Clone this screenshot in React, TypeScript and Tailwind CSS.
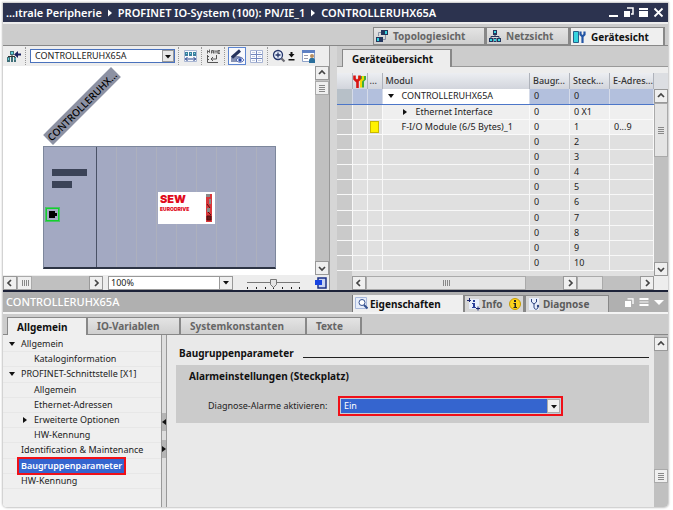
import { useState } from "react";
import type { ReactNode } from "react";

type Dir = "up" | "down" | "left" | "right";

const chevrons: Record<Dir, string> = {
  up: "M1 5 4 2 7 5",
  down: "M1 3 4 6 7 3",
  left: "M5 1 2 4 5 7",
  right: "M3 1 6 4 3 7",
};

const directionNames: Record<Dir, string> = {
  up: "Nach oben",
  down: "Nach unten",
  left: "Nach links",
  right: "Nach rechts",
};

function ScrollButton({ dir }: { dir: Dir }) {
  return (
    <button
      type="button"
      aria-label={directionNames[dir]}
      className="flex size-[14px] shrink-0 items-center justify-center border border-[#999] bg-[#efefef]"
    >
      <svg viewBox="0 0 8 8" className="size-2" fill="none" stroke="#444" strokeWidth="1.7">
        <path d={chevrons[dir]} />
      </svg>
    </button>
  );
}

function Grip({ vertical }: { vertical?: boolean }) {
  return (
    <svg viewBox="0 0 8 8" className="size-2" stroke="#888" strokeWidth="1">
      <path d={vertical ? "M1.5 1v6M3.5 1v6M5.5 1v6M7.5 1v6" : "M1 1.5h6M1 3.5h6M1 5.5h6M1 7.5h6"} />
    </svg>
  );
}

function DownTriangle() {
  return (
    <svg viewBox="0 0 8 5" className="h-[5px] w-2">
      <path d="M1 1h6L4 4.5z" fill="#111" />
    </svg>
  );
}

function Expander({ open }: { open: boolean }) {
  return (
    <svg viewBox="0 0 8 8" className="size-2 shrink-0">
      <path d={open ? "M1 2h6L4 6z" : "M2 1v6l4-3z"} fill="#111" />
    </svg>
  );
}

function TitleBar() {
  return (
    <header className="flex h-[19px] shrink-0 items-center justify-between bg-[#2c334f] pr-1 pl-[3px] text-white">
      <nav aria-label="Pfad" className="flex items-center text-[11px] leading-4 font-semibold whitespace-nowrap">
        <span>...ıtrale Peripherie</span>
        <svg viewBox="0 0 8 8" className="mx-1 size-2">
          <path d="M2 0.500v7l4-3.500z" fill="#fff" />
        </svg>
        <span>PROFINET IO-System (100): PN/IE_1</span>
        <svg viewBox="0 0 8 8" className="mx-1 size-2">
          <path d="M2 0.500v7l4-3.500z" fill="#fff" />
        </svg>
        <span>CONTROLLERUHX65A</span>
      </nav>
      <div className="flex items-center gap-1">
        <button type="button" aria-label="Minimieren">
          <svg viewBox="0 0 11 11" className="size-[11px]"><path d="M1 8h9v2H1z" fill="#fff" /></svg>
        </button>
        <button type="button" aria-label="Schwebend">
          <svg viewBox="0 0 11 11" className="size-[11px]">
            <path d="M4 1h6v6H8" fill="none" stroke="#fff" strokeWidth="1.500" />
            <path d="M1 4h6v6H1z" fill="#fff" />
          </svg>
        </button>
        <button type="button" aria-label="Maximieren">
          <svg viewBox="0 0 11 11" className="size-[11px]">
            <path d="M1 1h9v2H1zM1 4h9v6H1z" fill="#fff" />
          </svg>
        </button>
        <button type="button" aria-label="Schließen">
          <svg viewBox="0 0 11 11" className="size-[11px]" stroke="#fff" strokeWidth="1.800">
            <path d="M1.500 1.500l8 8M9.500 1.500l-8 8" />
          </svg>
        </button>
      </div>
    </header>
  );
}

function TopologyIcon() {
  return (
    <svg viewBox="0 0 12 12" className="size-3">
      <path d="M5 2.500H2.500V6M9.500 5v4.500H7" fill="none" stroke="#8a93a5" />
      <path d="M5 0h7v5H5zM0 7h7v5H0z" fill="#24365e" />
      <path d="M9 1h2v3H9zM1 8h2v3H1z" fill="#36d3dd" />
    </svg>
  );
}

function NetworkIcon() {
  return (
    <svg viewBox="0 0 12 12" className="size-3">
      <path d="M6 4v3M2 9V6.500h8V9" fill="none" stroke="#24365e" />
      <path d="M4 0h4v5H4zM0 8h4v4H0zM4.500 8h3v4h-3zM8 8h4v4H8z" fill="#24365e" />
      <path d="M5 1h2v2H5zM1 9h2v2H1zM5 9h2v2H5zM9 9h2v2H9z" fill="#36d3dd" />
    </svg>
  );
}

function DeviceIcon() {
  return (
    <svg viewBox="0 0 13 12" className="h-3 w-[13px]">
      <path d="M0.500 0.500h5v11h-5z" fill="#36d3dd" stroke="#24608a" />
      <path d="M7.500 0.500v3l2 2 2-2v-3M9.500 5v7" fill="none" stroke="#2355a5" strokeWidth="2.200" />
    </svg>
  );
}

function ViewTab({ icon, active, children }: { icon: ReactNode; active?: boolean; children: ReactNode }) {
  return (
    <button
      type="button"
      role="tab"
      aria-selected={!!active}
      className={
        "flex items-center gap-[5px] border-t border-r-2 border-l border-[#888] pl-[2px] text-[10px] leading-4 font-bold whitespace-nowrap " +
        (active
          ? "w-[95px] bg-[#efefef] text-[#111]"
          : "border-b bg-linear-to-b from-[#e4e4e4] to-[#cfcfcf] text-[#666]")
      }
    >
      {icon}
      {children}
    </button>
  );
}

function ViewTabs() {
  return (
    <div className="h-[24px] shrink-0 border-t-2 border-b border-t-[#ededed] border-b-[#888] bg-[#ccc] pt-[3px]">
      <div role="tablist" className="flex h-[18px] justify-end pr-[3px]">
        <div className="flex w-[113px] *:w-full"><ViewTab icon={<TopologyIcon />}>Topologiesicht</ViewTab></div>
        <div className="flex w-[84px] *:w-full"><ViewTab icon={<NetworkIcon />}>Netzsicht</ViewTab></div>
        <ViewTab icon={<DeviceIcon />} active>Gerätesicht</ViewTab>
      </div>
    </div>
  );
}

function ToolButton({ label, pressed, children }: { label: string; pressed?: boolean; children: ReactNode }) {
  return (
    <button
      type="button"
      aria-label={label}
      className={
        "flex h-[18px] items-center justify-center " +
        (pressed ? "w-[18px] border border-[#5b84d0] bg-[#f8f9fd]" : "w-[16px]")
      }
    >
      {children}
    </button>
  );
}

function ToolDivider() {
  return <span className="mx-[3px] h-[18px] border-l border-dotted border-[#999]" />;
}

function Toolbar() {
  return (
    <div className="flex h-[20px] shrink-0 items-center bg-[#ededed] pl-[3px]">
      <ToolButton label="Zum übergeordneten Gerät">
        <svg viewBox="0 0 14 14" className="size-[14px]">
          <path d="M3 2h4v4H3zM0 8h3v5H0zM4 8h2v5H4zM7 8h2v5H7z" fill="#3f6f78" />
          <path d="M4 3h2v2H4zM1 9h1v2H1zM7.500 9h1v2h-1z" fill="#5fd0d8" />
          <path d="M5 6v1.500M1 7.500h7" stroke="#333" fill="none" />
          <path d="M14 4.500h-3V2L7 5.500 11 9V6.500h3z" fill="#1b2260" />
        </svg>
      </ToolButton>
      <ToolDivider />
      <label className="relative ml-px flex w-[145px]">
        <select
          aria-label="Gerät"
          className="h-[14px] w-full appearance-none border border-[#4a72bd] bg-white pl-1 text-[9px] leading-3 text-[#222]"
        >
          <option>CONTROLLERUHX65A</option>
        </select>
        <span className="pointer-events-none absolute inset-y-px right-px flex w-3 items-center justify-center border border-[#999] bg-[#e8e8e8]">
          <DownTriangle />
        </span>
      </label>
      <ToolDivider />
      <ToolButton label="Baugruppenbreite">
        <svg viewBox="0 0 13 14" className="h-[14px] w-[13px]">
          <path d="M0.500 1.500h12v11H.5z" fill="#f6f8fc" stroke="#a9b6d3" />
          <path d="M1 3h3v4H1zM5 3h3v4H5zM9 3h3v4H9z" fill="#3a7d9c" />
          <path d="M2 4h1v1H2zM6 4h1v1H6zM10 4h1v1h-1z" fill="#7fe0e8" />
          <path d="M1 10h11M3.500 8 1.500 10l2 2M9.500 8l2 2-2 2" stroke="#23408a" fill="none" />
        </svg>
      </ToolButton>
      <ToolDivider />
      <ToolButton label="Name anzeigen">
        <svg viewBox="0 0 14 14" className="size-[14px]" fill="none" stroke="#555">
          <path d="M1.500 4.500v-3l2 2v-3M5.500 4.500v-3h2v3M5.500 3h2M9 4.500v-3l1 1 1-1v3M14 1.500h-2v3h2M12 3h2" strokeWidth="0.900" />
          <path d="M1 7.500h2M1 10.500h2M1.500 6v7.500H12M10.500 6v4H5M7 8 5 10l2 2" />
        </svg>
      </ToolButton>
      <ToolDivider />
      <ToolButton label="Beschriftung anzeigen" pressed>
        <svg viewBox="0 0 15 15" className="size-[15px]">
          <path d="M1 7h8l4 2v4H1z" fill="#8792b4" />
          <path d="M2 8.500 10 1.500" stroke="#26335d" strokeWidth="3" />
          <path d="M6 11c2-3 6-3 8 0-2 3-6 3-8 0z" fill="#eef2ff" stroke="#3952a0" strokeWidth="0.800" />
          <circle cx="10" cy="11" r="1.700" fill="#2446a8" />
        </svg>
      </ToolButton>
      <span className="w-[2px]" />
      <ToolButton label="Raster anzeigen">
        <svg viewBox="0 0 13 13" className="size-[13px]">
          <path d="M0.500 0.500h12v12H.5z" fill="#fbfcff" stroke="#a6b3d3" />
          <path d="M6.500 1v11M1 4.500h11M1 8.500h11" stroke="#7387bd" fill="none" />
          <path d="M2 2.500h3M8 2.500h3M2 6.500h3M8 6.500h3M2 10.500h3M8 10.500h3" stroke="#c5cde0" />
        </svg>
      </ToolButton>
      <ToolDivider />
      <ToolButton label="Zoom">
        <svg viewBox="0 0 14 14" className="size-[14px]" fill="none">
          <circle cx="6" cy="6" r="4.500" fill="#e5edfb" stroke="#25356a" strokeWidth="1.300" />
          <path d="M3.500 6h5M6 3.500v5" stroke="#25356a" strokeWidth="1.300" />
          <path d="M9.500 9.500 12.500 12.500" stroke="#6d6d75" strokeWidth="2.200" />
        </svg>
      </ToolButton>
      <button type="button" aria-label="Zoomstufe" className="flex w-[9px] justify-center">
        <svg viewBox="0 0 7 9" className="h-[9px] w-[7px]">
          <path d="M2.500 0h2v2h2L3.500 5.500.5 2h2zM0.500 7h6v1.500h-6z" fill="#111" />
        </svg>
      </button>
      <span className="w-1" />
      <ToolButton label="Einstellungen">
        <svg viewBox="0 0 13 13" className="size-[13px]">
          <path d="M0.500 0.500h12v11H.5z" fill="#fff" stroke="#8da1c9" />
          <path d="M0 0h13v3H0z" fill="#5e80c4" />
          <path d="M2 5.500h4M2 8.500h4" stroke="#99a" />
          <circle cx="10" cy="6" r="2" fill="#b98f62" />
          <path d="M7 13V9.500L8.500 8h3L13 9.500V13z" fill="#2a6f9c" />
        </svg>
      </ToolButton>
    </div>
  );
}

function RackCanvas() {
  return (
    <div className="relative min-w-0 flex-1 overflow-hidden bg-white">
      <div className="absolute top-[80px] left-[40px] h-[123px] w-[233px] border border-b-2 border-[#7d879c] border-b-[#2d3444] bg-[#a3a9c2]">
        <div className="flex h-full">
          <div className="h-full w-[53px] border-r border-[#4a5266] pt-[22px] pl-2">
            <div className="h-[7px] w-[35px] bg-[#3b4357]" />
            <div className="mt-[5px] h-[7px] w-5 bg-[#3b4357]" />
          </div>
          <div className="flex flex-1">
            {[1, 2, 3, 4, 5, 6, 7, 8].map((slot) => (
              <div key={slot} className="w-[20px] border-r border-[#adb0bd]" />
            ))}
          </div>
        </div>
      </div>
      <div className="absolute top-[142px] left-[43px] flex size-[13px] items-center border border-[#12d12c] pl-[2px] outline outline-[#12d12c]/60">
        <svg viewBox="0 0 8 7" className="h-[7px] w-2"><path d="M0 0h6v2h2v3H6v2H0z" fill="#000" /></svg>
      </div>
      <div className="absolute top-[126px] left-[155px] flex h-[32px] w-[57px] justify-between bg-white pr-[3px] pl-[2px] font-['Inter','Open_Sans',sans-serif] text-[#e00b1c]">
        <div>
          <div className="text-[11px] leading-[14px] font-black">SEW</div>
          <div className="text-[5px] leading-[6px] font-black">EURODRIVE</div>
        </div>
        <svg viewBox="0 0 6 28" className="mt-[2px] h-[28px] w-[6px]">
          <path d="M0 0h6v28H0z" fill="#d9363a" />
          <path d="M0 0h4v3H0zM3 5h2v5H3zM1 14h3v4H1z" fill="#8a8a8a" />
          <path d="M1 10l3 4M2 18l3 3M1 22h4v4H1z" stroke="#511" fill="#6b1a1a" />
        </svg>
      </div>
      <div className="absolute top-[33px] left-[31px] h-[14px] w-[96px] -rotate-45 bg-[#8c91a3] text-center text-[10px] leading-[14px] font-medium whitespace-nowrap text-black">
        CONTROLLERUHX...
      </div>
    </div>
  );
}

function StatusBar() {
  const [zoom, setZoom] = useState(50);
  return (
    <div className="flex h-[15px] shrink-0 items-center bg-[#ededed]">
      <div className="flex w-[100px] items-center bg-[#c0c0c0]">
        <ScrollButton dir="left" />
        <span className="flex h-[14px] w-[15px] items-center justify-center border border-[#aaa] bg-[#efefef]">
          <Grip vertical />
        </span>
        <span className="flex-1" />
        <ScrollButton dir="right" />
      </div>
      <label className="relative ml-[5px] flex w-[125px]">
        <select
          aria-label="Zoomfaktor"
          className="h-[14px] w-full appearance-none border border-[#999] bg-white pl-[2px] text-[9px] leading-3 text-[#222]"
        >
          <option>100%</option>
        </select>
        <span className="pointer-events-none absolute inset-y-0 right-0 flex w-[14px] items-center justify-center border border-[#999] bg-[#efefef]">
          <DownTriangle />
        </span>
      </label>
      <label className="relative ml-[13px] flex w-[56px]">
        <svg viewBox="0 0 56 14" className="h-[14px] w-full">
          <path d="M1 6.500h53" stroke="#777" />
          <path d="M1.500 11v2M10.500 11v2M19.500 11v2M27.500 11v2M36.500 11v2M45.500 11v2M53.500 11v2" stroke="#222" />
          <path d="M24.500 3.500h6v5l-3 3-3-3z" fill="#e4e4e4" stroke="#777" />
        </svg>
        <input
          type="range"
          aria-label="Zoom-Schieber"
          value={zoom}
          onChange={(e) => setZoom(Number(e.target.value))}
          className="absolute inset-0 m-0 w-full opacity-0"
        />
      </label>
      <button type="button" aria-label="Übersichtsnavigation" className="ml-[13px]">
        <svg viewBox="0 0 13 12" className="h-3 w-[13px]">
          <path d="M3 1h8v10H3z" fill="#c9d4f2" stroke="#1a2f86" strokeWidth="1.500" />
          <path d="M0 3h7v5H0z" fill="#1743e0" />
        </svg>
      </button>
    </div>
  );
}

const modules = [
  { name: "CONTROLLERUHX65A", rack: "0", slot: "0", address: "" },
  { name: "Ethernet Interface", rack: "0", slot: "0 X1", address: "" },
  { name: "F-I/O Module (6/5 Bytes)_1", rack: "0", slot: "1", address: "0...9" },
  ...["2", "3", "4", "5", "6", "7", "8", "9", "10"].map((slot) => ({ name: "", rack: "0", slot, address: "" })),
];

function ModuleTable() {
  return (
    <table className="h-[198px] w-full table-fixed border-collapse text-[9px] leading-3 text-[#222]">
      <colgroup>
        <col className="w-[15px]" />
        <col className="w-[15px]" />
        <col className="w-[15px]" />
        <col />
        <col className="w-[40px]" />
        <col className="w-[40px]" />
        <col className="w-[44px]" />
      </colgroup>
      <thead>
        <tr className="h-[16px] bg-linear-to-b from-[#eceef2] to-[#d2d5dc] text-left text-[#333] *:border-r *:border-[#aeb2ba] *:p-0 *:font-medium *:whitespace-nowrap">
          <th aria-label="Zeile" />
          <th aria-label="Status">
            <svg viewBox="0 0 13 13" className="mx-auto size-[13px]" fill="none">
              <path d="M8 1v3l2 2 2-2V1M10 6v6.500" stroke="#3fae3a" strokeWidth="2" />
              <path d="M6 1v3l2 2 2-2V1M8 6v6.500" stroke="#f0d800" strokeWidth="2" />
              <path d="M1.500 0.500V4l2.500 2.500L6.500 4V.5M4.500 6v7" stroke="#d81414" strokeWidth="2.600" />
            </svg>
          </th>
          <th><span className="pl-[2px]">...</span></th>
          <th><span className="pl-[3px]">Modul</span></th>
          <th><span className="pl-[3px]">Baugr...</span></th>
          <th><span className="pl-[3px]">Steck...</span></th>
          <th><span className="pl-[3px]">E-Adres...</span></th>
        </tr>
      </thead>
      <tbody>
        {modules.map((row, i) => (
          <tr
            key={row.slot}
            className={
              "h-[15px] *:border-r *:border-b *:p-0 *:whitespace-nowrap " +
              (i === 0
                ? "bg-[#b3c0dd] *:border-r-[#d5dbe9] *:border-b-[#4c76c8]"
                : i < 3
                  ? "bg-[#efefef] *:border-[#fafafa]"
                  : "bg-[#e0e0e0] *:border-[#f8f8f8]")
            }
          >
            <td className={i === 0 ? "bg-[#b7c0c8]" : "bg-[#cacaca]"} />
            <td className={i === 0 ? "" : "bg-[#e0e0e0]"} />
            <td className={i === 0 ? "" : "bg-[#e0e0e0]"}>
              {i === 2 && <div className="mx-auto h-[12px] w-[9px] border border-[#c9b800] bg-[#fff200]" />}
            </td>
            <td className={i === 0 ? "bg-white" : ""}>
              <div className="flex items-center">
                {i === 0 && <span className="ml-1 flex w-[15px]"><Expander open /></span>}
                {i === 1 && <span className="ml-[18px] flex w-[15px]"><Expander open={false} /></span>}
                {i > 1 && <span className="w-[19px]" />}
                {row.name}
              </div>
            </td>
            <td><span className="pl-1">{row.rack}</span></td>
            <td><span className="pl-1">{row.slot}</span></td>
            <td><span className="pl-1">{row.address}</span></td>
          </tr>
        ))}
      </tbody>
    </table>
  );
}

function Overview() {
  return (
    <section className="flex min-w-0 flex-1 flex-col bg-[#ededed]">
      <div className="flex h-[21px] shrink-0 items-end border-b border-[#999] bg-[#ccc]">
        <div className="h-[18px] w-[5px] shrink-0" />
        <button
          type="button"
          role="tab"
          aria-selected
          className="-mb-px h-[18px] w-[110px] border-t border-r-2 border-l border-[#888] bg-[#ededed] pl-[9px] text-left text-[10px] leading-4 font-bold text-[#111]"
        >
          Geräteübersicht
        </button>
      </div>
      <div className="flex flex-1 pt-[6px]">
        <div className="flex min-w-0 flex-1 flex-col bg-[#e0e0e0]">
          <ModuleTable />
          <div className="flex flex-1 items-end">
            <div className="h-full w-[15px] bg-[#cacaca]" />
            <div className="flex flex-1 bg-[#c0c0c0]">
              <ScrollButton dir="left" />
              <span className="flex h-[14px] flex-1 items-center justify-center border border-[#aaa] bg-[#e4e4e4]">
                <Grip vertical />
              </span>
              <span className="w-[37px]" />
              <ScrollButton dir="right" />
              <span className="h-[14px] w-[26px] border border-[#aaa] bg-[#e4e4e4]" />
              <span className="w-[37px]" />
              <ScrollButton dir="right" />
            </div>
          </div>
        </div>
        <div className="flex w-[14px] flex-col bg-[#c0c0c0]">
          <div className="h-[16px] bg-[#dcdee2]" />
          <ScrollButton dir="up" />
          <span className="flex h-[54px] items-center justify-center border border-[#aaa] bg-[#e4e4e4]"><Grip /></span>
          <span className="flex-1" />
          <ScrollButton dir="down" />
          <div className="h-[14px] bg-[#ededed]" />
        </div>
      </div>
    </section>
  );
}

function InspectorHeader() {
  return (
    <div className="flex h-[22px] shrink-0 items-end border-b-2 border-[#f4f4f4] bg-[#b0b0b0] pl-[3px]">
      <h2 className="flex-1 self-center text-[11px] leading-4 font-medium text-white">CONTROLLERUHX65A</h2>
      <div role="tablist" className="flex h-[17px] text-[10px] leading-4 font-bold whitespace-nowrap text-[#5c5c5c]">
        <button type="button" role="tab" aria-selected className="flex w-[111px] items-center gap-[2px] border-l border-[#777] bg-[#efefef] pl-[2px] text-[#111]">
          <svg viewBox="0 0 13 13" className="size-[13px]" fill="none">
            <path d="M0.500 0.500h11v11H.5z" fill="#e6edfa" stroke="#a9b9dc" />
            <circle cx="7" cy="5.500" r="3" fill="#fff" stroke="#34508f" />
            <path d="M9 8l3.500 3.500" stroke="#34508f" strokeWidth="2" />
          </svg>
          Eigenschaften
        </button>
        <button type="button" role="tab" aria-selected={false} className="flex w-[62px] items-center gap-[2px] border-t border-r-2 border-l-2 border-[#888] bg-[#d6d6d6] pl-[2px]">
          <svg viewBox="0 0 13 13" className="size-[13px]">
            <path d="M2 1h10v10H2z" fill="#e8eefb" />
            <path d="M6 2h2v2H6zM5 5h3v4h1v1H5V9h1V6H5z" fill="#2a3f9a" />
            <path d="M0 2.500h4M2.500 0v4M9 10.500h4M11 8.500v4" stroke="#1b2670" />
          </svg>
          <span className="flex-1 text-left">Info</span>
          <svg viewBox="0 0 12 12" className="mr-[2px] size-3">
            <circle cx="6" cy="6" r="5.500" fill="#fbd21c" stroke="#c59a00" />
            <path d="M5 2h2v2H5zM4.500 5H7v4h1v1H4.500V9h1V6h-1z" fill="#222" />
          </svg>
        </button>
        <button type="button" role="tab" aria-selected={false} className="flex w-[84px] items-center gap-[2px] border-t border-r border-l border-[#888] bg-[#d6d6d6] pl-[3px]">
          <svg viewBox="0 0 12 13" className="h-[13px] w-3" fill="none">
            <path d="M0 0h10v12H0z" fill="#e8eefb" />
            <path d="M2.500 1v3L5 6l2.500-2V1M5 6v3c0 3 4 3 4 0" stroke="#2e4480" />
            <circle cx="9" cy="8" r="1.200" fill="#2e4480" />
          </svg>
          Diagnose
        </button>
      </div>
      <div className="flex w-[59px] items-center justify-end gap-[5px] self-center pr-1">
        <button type="button" aria-label="Schwebend">
          <svg viewBox="0 0 10 9" className="h-[9px] w-[10px]"><path d="M3.500.8h5.500V6" fill="none" stroke="#fff" strokeWidth="1.300" /><path d="M1 3h6v6H1z" fill="#fff" /></svg>
        </button>
        <button type="button" aria-label="Teilen">
          <svg viewBox="0 0 10 9" className="h-[9px] w-[10px]"><path d="M.5 0h9v2h-9zM.5 6h9v2h-9z" fill="#fff" /><path d="M.5 3h9v2h-9z" fill="#d4d4d4" /></svg>
        </button>
        <button type="button" aria-label="Zuklappen">
          <svg viewBox="0 0 10 9" className="h-[9px] w-[10px]"><path d="M0 2h10L5 7z" fill="#fff" /></svg>
        </button>
      </div>
    </div>
  );
}

const inactiveTab =
  "border-t border-r-2 border-[#888] bg-linear-to-b from-[#e4e4e4] to-[#cfcfcf] pl-[9px] text-left text-[#666]";

function InspectorTabs() {
  return (
    <div className="flex h-[21px] shrink-0 items-end border-b border-[#888] bg-[#ccc] pl-1">
      <div role="tablist" className="flex h-[17px] text-[10px] leading-4 font-bold whitespace-nowrap">
        <button type="button" role="tab" aria-selected className="-mb-px h-[18px] w-[81px] border-t border-r-2 border-l border-[#888] bg-[#efefef] pl-[9px] text-left text-[#111]">Allgemein</button>
        <button type="button" role="tab" aria-selected={false} className={"w-[93px] " + inactiveTab}>IO-Variablen</button>
        <button type="button" role="tab" aria-selected={false} className={"w-[126px] " + inactiveTab}>Systemkonstanten</button>
        <button type="button" role="tab" aria-selected={false} className={"w-[55px] " + inactiveTab}>Texte</button>
      </div>
    </div>
  );
}

const tree: { label: string; child?: boolean; open?: boolean; selected?: boolean }[] = [
  { label: "Allgemein", open: true },
  { label: "Kataloginformation", child: true },
  { label: "PROFINET-Schnittstelle [X1]", open: true },
  { label: "Allgemein", child: true },
  { label: "Ethernet-Adressen", child: true },
  { label: "Erweiterte Optionen", child: true, open: false },
  { label: "HW-Kennung", child: true },
  { label: "Identification & Maintenance" },
  { label: "Baugruppenparameter", selected: true },
  { label: "HW-Kennung" },
];

function NavigationTree() {
  return (
    <nav aria-label="Eigenschaften" className="w-[158px] shrink-0 bg-[#efefef] pt-[2px]">
      <ul className="grid h-[152px] auto-rows-fr text-[9px] leading-3 text-[#222]">
        {tree.map((item, i) => (
          <li key={i} className={"flex items-center border-b border-[#e7e7e7] " + (item.child ? "pl-[18px]" : "pl-[5px]")}>
            <span className="flex w-[13px] shrink-0">{item.open !== undefined && <Expander open={item.open} />}</span>
            {item.selected ? (
              <button type="button" className="-my-1 -ml-[4px] border-2 border-[#f01018] bg-[#3565cf] px-[2px] py-px font-semibold whitespace-nowrap text-white">
                {item.label}
              </button>
            ) : (
              <button type="button" className="whitespace-nowrap">{item.label}</button>
            )}
          </li>
        ))}
      </ul>
    </nav>
  );
}

function Splitter() {
  return (
    <div className="flex w-[6px] shrink-0 flex-col border-x border-[#999] bg-[#dedede] pt-[78px]">
      <button type="button" aria-label="Navigation ausblenden" className="flex h-[18px] items-center bg-[#b5b5b5]">
        <svg viewBox="0 0 4 6" className="h-[6px] w-1"><path d="M4 0v6L0 3z" fill="#111" /></svg>
      </button>
      <span className="h-[9px]" />
      <button type="button" aria-label="Navigation erweitern" className="flex h-[18px] items-center bg-[#b5b5b5]">
        <svg viewBox="0 0 4 6" className="h-[6px] w-1"><path d="M0 0v6l4-3z" fill="#111" /></svg>
      </button>
    </div>
  );
}

function Parameters() {
  return (
    <section className="min-w-0 flex-1 bg-[#e9e9e9] pt-[10px] pr-[5px] pl-[9px]">
      <div className="flex items-center gap-[9px] pl-[3px]">
        <h3 className="text-[10px] leading-4 font-bold text-[#111]">Baugruppenparameter</h3>
        <span className="mt-2 h-px flex-1 bg-[#222]" />
      </div>
      <div className="mt-1 h-[58px] bg-[#cbcbcb] pt-[3px] pl-[13px]">
        <h4 className="text-[10px] leading-4 font-bold text-[#111]">Alarmeinstellungen (Steckplatz)</h4>
        <div className="mt-[12px] flex items-center pl-[19px]">
          <label htmlFor="diagnose-alarme" className="w-[130px] text-[9px] leading-3 whitespace-nowrap text-[#222]">
            Diagnose-Alarme aktivieren:
          </label>
          <div className="relative flex w-[225px] border-2 border-[#f01018] bg-[#c4ccd6] p-px">
            <select
              id="diagnose-alarme"
              className="h-[14px] w-full appearance-none bg-[#3565cf] pl-[3px] text-[9px] leading-3 text-white"
            >
              <option>Ein</option>
            </select>
            <span className="pointer-events-none absolute inset-y-px right-px flex w-[13px] items-center justify-center border border-[#aaa] bg-[#efefef]">
              <DownTriangle />
            </span>
          </div>
        </div>
      </div>
    </section>
  );
}

export default function App() {
  return (
    <div className="flex h-screen min-w-[640px] bg-white p-[3px] pr-[5px] font-['Noto_Sans','Open_Sans',sans-serif]">
      <div className="flex min-w-0 flex-1 flex-col rounded-b-sm shadow-[0_0_2px_1px_#c4c4c4]">
        <TitleBar />
        <ViewTabs />
        <main className="flex h-[246px] shrink-0 border-b-2 border-[#1c2238]">
          <section className="flex w-[327px] shrink-0 flex-col border-r border-[#999]">
            <Toolbar />
            <div className="flex min-h-0 flex-1">
              <RackCanvas />
              <div className="flex w-[14px] shrink-0 flex-col bg-[#c0c0c0]">
                <ScrollButton dir="up" />
                <span className="mt-px flex h-[14px] items-center justify-center border border-[#aaa] bg-[#efefef]"><Grip /></span>
                <span className="flex-1" />
                <ScrollButton dir="down" />
              </div>
            </div>
            <StatusBar />
          </section>
          <div className="w-[7px] shrink-0 bg-[#d6d6d6]" />
          <Overview />
        </main>
        <InspectorHeader />
        <InspectorTabs />
        <div className="flex min-h-0 flex-1 overflow-hidden rounded-b-sm">
          <NavigationTree />
          <Splitter />
          <Parameters />
          <div className="flex w-[14px] shrink-0 flex-col bg-[#c0c0c0] pt-[2px]">
            <ScrollButton dir="up" />
            <span className="flex-1" />
            <span className="mb-6 flex h-[14px] items-center justify-center border border-[#aaa] bg-[#efefef]"><Grip /></span>
          </div>
        </div>
      </div>
    </div>
  );
}
